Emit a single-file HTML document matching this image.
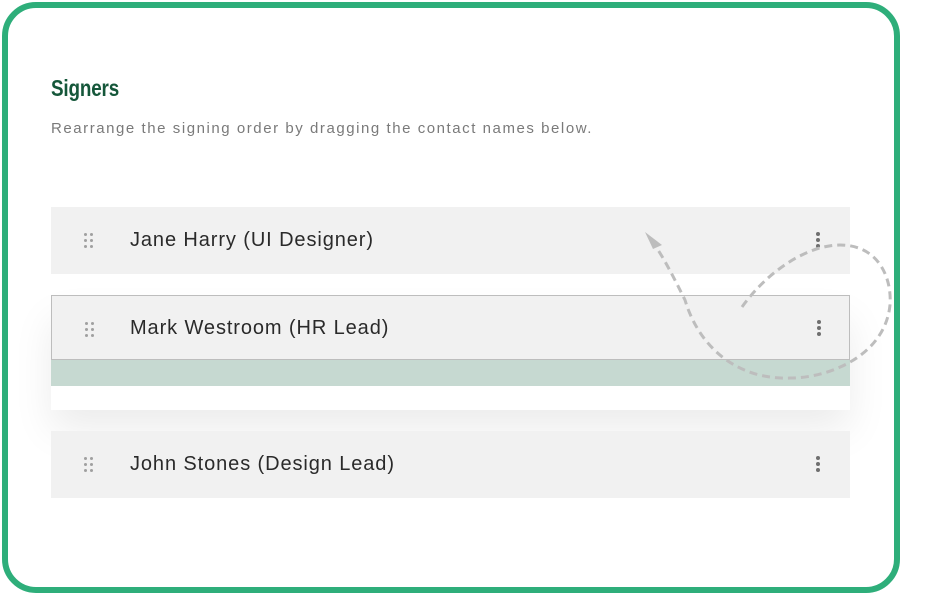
<!DOCTYPE html>
<html><head><style>
html,body{margin:0;padding:0;background:#fff;width:930px;height:591px;overflow:hidden}
.card{position:absolute;left:2px;top:2px;width:886px;height:579px;border:6px solid #2eae7a;border-radius:34px;background:#fff}
h1{position:absolute;left:51px;top:75px;margin:0;font:bold 23px "Liberation Sans Narrow","Liberation Sans",sans-serif;color:#15573a;letter-spacing:-0.2px;transform:scaleX(0.82);transform-origin:left}
.sub{position:absolute;left:51px;top:120px;font:15px "Liberation Sans",sans-serif;color:#7a7a7a;letter-spacing:1.55px}
.row{position:absolute;left:51px;width:799px;height:67px;background:#f1f1f1;font:20px "Liberation Sans",sans-serif;color:#2a2a2a;letter-spacing:0.9px}
.row .n{position:absolute;left:79px;top:22px}
.grip{position:absolute;left:33px;top:26px;width:10px;height:16px}
.grip i{position:absolute;width:3px;height:3px;border-radius:50%;background:#a0a0a0}
.dots{position:absolute;left:765px;top:25px}
.dots i{display:block;width:4px;height:4px;border-radius:50%;background:#6f6f6f;margin-bottom:2px}
</style></head><body>
<div class="card"></div>
<h1>Signers</h1>
<div class="sub">Rearrange the signing order by dragging the contact names below.</div>
<div class="row" style="top:207px"><div class="grip"><i style="left:0;top:0"></i><i style="left:6px;top:0"></i><i style="left:0;top:6px"></i><i style="left:6px;top:6px"></i><i style="left:0;top:12px"></i><i style="left:6px;top:12px"></i></div><span class="n">Jane Harry (UI Designer)</span><div class="dots"><i></i><i></i><i></i></div></div>
<div style="position:absolute;left:51px;top:360px;width:799px;height:26px;background:#c6d9d1"></div>
<div style="position:absolute;left:51px;top:300px;width:799px;height:110px;box-shadow:0 20px 40px rgba(0,0,0,0.08)"></div>
<div class="row" style="top:295px;height:65px;border:1px solid #bdbdbd;box-sizing:border-box"><div class="grip"><i style="left:0;top:0"></i><i style="left:6px;top:0"></i><i style="left:0;top:6px"></i><i style="left:6px;top:6px"></i><i style="left:0;top:12px"></i><i style="left:6px;top:12px"></i></div><span class="n" style="left:78px;top:21px">Mark Westroom (HR Lead)</span><div class="dots" style="top:24px"><i></i><i></i><i></i></div></div>
<div class="row" style="top:431px"><div class="grip"><i style="left:0;top:0"></i><i style="left:6px;top:0"></i><i style="left:0;top:6px"></i><i style="left:6px;top:6px"></i><i style="left:0;top:12px"></i><i style="left:6px;top:12px"></i></div><span class="n">John Stones (Design Lead)</span><div class="dots"><i></i><i></i><i></i></div></div>
<svg style="position:absolute;left:0;top:0" width="930" height="591">
<path d="M742,307 C770,268 810,245 840,245 C880,245 892,280 890,305 C885,355 830,378 790,378 C740,380 700,350 685,300 C675,280 665,260 656,247" fill="none" stroke="#bdbdbd" stroke-width="3" stroke-dasharray="8,5"/>
<path d="M645,232 L662,245 L653,249 Z" fill="#bdbdbd"/>
</svg>
</body></html>
